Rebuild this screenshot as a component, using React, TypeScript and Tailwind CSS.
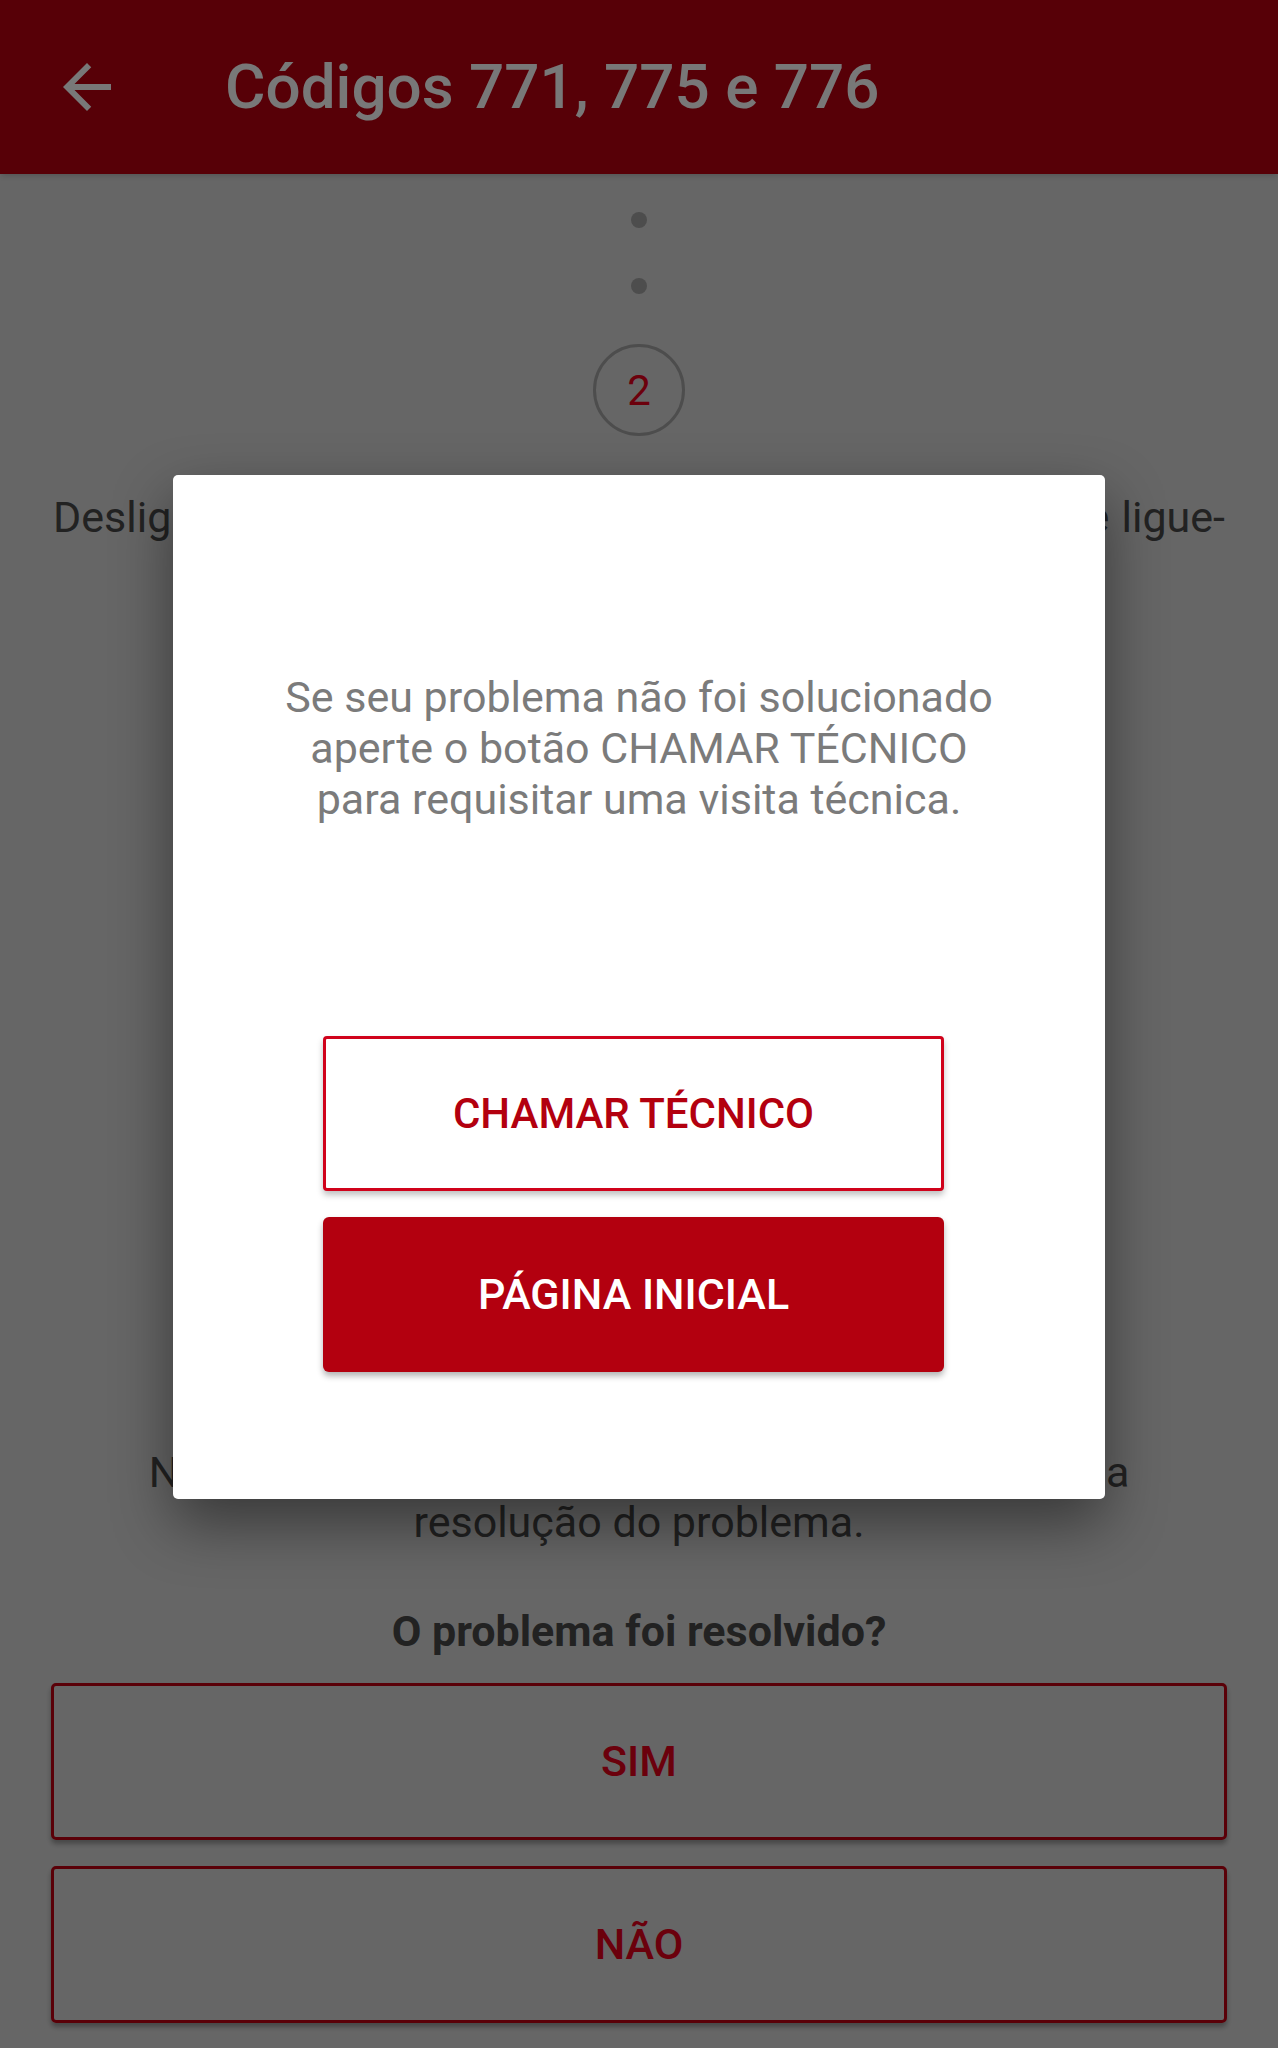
import React from "react";

function BackIcon() {
  return (
    <svg viewBox="0 0 24 24" width={72} height={72} className="fill-white">
      <path d="M20 11H7.83l5.59-5.59L12 4l-8 8 8 8 1.41-1.41L7.83 13H20v-2z" />
    </svg>
  );
}

function OutlineButton({ title }: { title: string }) {
  return (
    <button className="flex h-[157px] w-full items-center justify-center rounded-[5px] border-[3px] border-[#bf0011] text-[43px] font-medium text-[#e3001b] shadow-[0_4px_5px_rgba(0,0,0,0.3)]">
      {title}
    </button>
  );
}

export default function App() {
  return (
    <div className="relative min-h-[2048px] w-full overflow-hidden bg-[#d9d9d9] font-['Roboto',sans-serif]">
      {/* Toolbar */}
      <header className="flex h-[174px] items-center bg-[#b9000f] shadow-md">
        <button className="ml-[51px] flex h-[72px] w-[72px] items-center justify-center" aria-label="voltar">
          <BackIcon />
        </button>
        <h1 className="ml-[102px] text-[62px] leading-none font-medium text-white">
          Códigos 771, 775 e 776
        </h1>
      </header>

      {/* Step content */}
      <main className="flex flex-col items-center px-[51px]">
        <div className="mt-[38px] h-4 w-4 rounded-full bg-[#a4a4a4]" />
        <div className="mt-[50px] h-4 w-4 rounded-full bg-[#a4a4a4]" />
        <div className="mt-[50px] flex h-[92px] w-[92px] items-center justify-center rounded-full border-[3px] border-[#a4a4a4] text-[42px] text-[#e6001a]">
          2
        </div>

        <p className="mt-[56px] w-full px-[2px] text-center text-[43px] leading-[50px] text-[#484848]">
          <span className="block text-justify [text-align-last:justify]">
            Desligue o dispositivo da tomada, aguarde 2 minutos e ligue-
          </span>
          o novamente.
        </p>

        <div className="h-[855px]" />

        <p className="w-full text-center text-[43px] leading-[50px] text-[#484848]">
          Nesse momento, confirme se você teve sucesso na
          <br />
          resolução do problema.
        </p>

        <h2 className="mt-[59px] text-center text-[43px] leading-[50px] font-bold text-[#484848]">
          O problema foi resolvido?
        </h2>

        <div className="mt-[27px] flex w-full flex-col gap-[26px]">
          <OutlineButton title="SIM" />
          <OutlineButton title="NÃO" />
        </div>
      </main>

      {/* Dialog */}
      <div className="absolute inset-0 flex justify-center bg-black/[0.53] pt-[475px]">
        <div className="flex h-[1024px] w-[932px] flex-col items-center rounded-[5px] bg-white pt-[197px] shadow-[0_24px_60px_rgba(0,0,0,0.45)]">
          <p className="text-center text-[43px] leading-[51px] text-[#7b7b7b]">
            Se seu problema não foi solucionado
            <br />
            aperte o botão CHAMAR TÉCNICO
            <br />
            para requisitar uma visita técnica.
          </p>

          <div className="mt-[211px] mr-[11px] flex w-[621px] flex-col gap-[26px]">
            <button className="flex h-[155px] w-full items-center justify-center rounded-[4px] border-[3px] border-[#d0021b] bg-white text-[42px] font-medium text-[#b3000f] shadow-[0_4px_6px_rgba(0,0,0,0.25)]">
              CHAMAR TÉCNICO
            </button>
            <button className="flex h-[155px] w-full items-center justify-center rounded-[6px] bg-[#b3000f] text-[43px] font-medium text-white shadow-[0_4px_6px_rgba(0,0,0,0.3)]">
              PÁGINA INICIAL
            </button>
          </div>
        </div>
      </div>
    </div>
  );
}
